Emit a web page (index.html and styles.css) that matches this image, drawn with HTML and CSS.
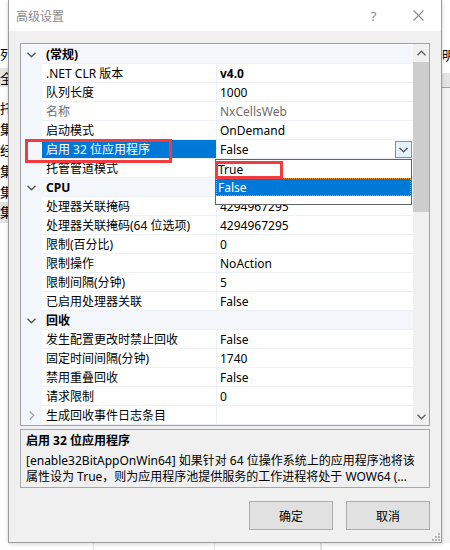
FILE: index.html
```html
<!DOCTYPE html>
<html lang="zh-CN">
<head>
  <meta charset="UTF-8">
  <meta name="viewport" content="width=device-width, initial-scale=1.0">
  <title>高级设置</title>
  <link rel="stylesheet" href="styles.css">
</head>
<body>

<!-- the IIS manager window behind the dialog -->
<div class="backdrop">
  <ul class="pool-list">
    <li class="head">列表</li>
    <li class="tab">全部</li>
    <li>托管</li>
    <li>集成</li>
    <li>经典</li>
    <li>集成</li>
    <li>集成</li>
    <li class="tab">集成</li>
  </ul>
  <div class="actions">
    <div class="head">明细</div>
    <div class="band"></div>
    <div class="rest"></div>
  </div>
  <div class="table-cols">
    <span style="width:93px"></span>
    <span style="width:120px"></span>
    <span style="width:105px"></span>
    <span></span>
  </div>
</div>

<div class="dialog">
  <div class="titlebar">
    <span class="title">高级设置</span>
    <span class="cap-btn">?</span>
    <span class="cap-btn">
      <svg width="11" height="11" viewBox="0 0 11 11"><path d="M0.5 0.5 L10.5 10.5 M10.5 0.5 L0.5 10.5" stroke="#8c8c8c" stroke-width="1.1" fill="none"/></svg>
    </span>
  </div>

  <div class="content">
    <div class="grid">
      <div class="rows">
        <div class="row cat">
          <span class="gutter"><svg width="9" height="6" viewBox="0 0 9 6"><path d="M0.5 0.8 L4.5 4.8 L8.5 0.8" stroke="#555" stroke-width="1.4" fill="none"/></svg></span>
          <span class="name">(常规)</span><span class="value"></span>
        </div>
        <div class="row"><span class="gutter"></span><span class="name">.NET CLR 版本</span><span class="value bold">v4.0</span></div>
        <div class="row"><span class="gutter"></span><span class="name">队列长度</span><span class="value">1000</span></div>
        <div class="row readonly"><span class="gutter"></span><span class="name">名称</span><span class="value">NxCellsWeb</span></div>
        <div class="row"><span class="gutter"></span><span class="name">启动模式</span><span class="value">OnDemand</span></div>
        <div class="row selected">
          <span class="gutter"></span><span class="name">启用 32 位应用程序</span>
          <span class="value">False
            <span class="drop-btn"><svg width="9" height="6" viewBox="0 0 9 6"><path d="M0.5 0.8 L4.5 4.8 L8.5 0.8" stroke="#333" stroke-width="1.1" fill="none"/></svg></span>
          </span>
        </div>
        <div class="row"><span class="gutter"></span><span class="name">托管管道模式</span><span class="value"></span></div>
        <div class="row cat">
          <span class="gutter"><svg width="9" height="6" viewBox="0 0 9 6"><path d="M0.5 0.8 L4.5 4.8 L8.5 0.8" stroke="#555" stroke-width="1.4" fill="none"/></svg></span>
          <span class="name">CPU</span><span class="value"></span>
        </div>
        <div class="row"><span class="gutter"></span><span class="name">处理器关联掩码</span><span class="value">4294967295</span></div>
        <div class="row"><span class="gutter"></span><span class="name">处理器关联掩码(64 位选项)</span><span class="value">4294967295</span></div>
        <div class="row"><span class="gutter"></span><span class="name">限制(百分比)</span><span class="value">0</span></div>
        <div class="row"><span class="gutter"></span><span class="name">限制操作</span><span class="value">NoAction</span></div>
        <div class="row"><span class="gutter"></span><span class="name">限制间隔(分钟)</span><span class="value">5</span></div>
        <div class="row"><span class="gutter"></span><span class="name">已启用处理器关联</span><span class="value">False</span></div>
        <div class="row cat">
          <span class="gutter"><svg width="9" height="6" viewBox="0 0 9 6"><path d="M0.5 0.8 L4.5 4.8 L8.5 0.8" stroke="#555" stroke-width="1.4" fill="none"/></svg></span>
          <span class="name">回收</span><span class="value"></span>
        </div>
        <div class="row"><span class="gutter"></span><span class="name">发生配置更改时禁止回收</span><span class="value">False</span></div>
        <div class="row"><span class="gutter"></span><span class="name">固定时间间隔(分钟)</span><span class="value">1740</span></div>
        <div class="row"><span class="gutter"></span><span class="name">禁用重叠回收</span><span class="value">False</span></div>
        <div class="row"><span class="gutter"></span><span class="name">请求限制</span><span class="value">0</span></div>
        <div class="row">
          <span class="gutter"><svg width="6" height="9" viewBox="0 0 6 9"><path d="M0.8 0.5 L4.8 4.5 L0.8 8.5" stroke="#a6a6a6" stroke-width="1.3" fill="none"/></svg></span>
          <span class="name">生成回收事件日志条目</span><span class="value"></span>
        </div>
      </div>

      <div class="scrollbar">
        <span class="arrow"><svg width="9" height="6" viewBox="0 0 9 6"><path d="M0.5 5.2 L4.5 1.2 L8.5 5.2" stroke="#606060" stroke-width="1.4" fill="none"/></svg></span>
        <span class="thumb"></span>
        <span class="track"></span>
        <span class="arrow"><svg width="9" height="6" viewBox="0 0 9 6"><path d="M0.5 0.8 L4.5 4.8 L8.5 0.8" stroke="#606060" stroke-width="1.4" fill="none"/></svg></span>
      </div>

      <!-- open combo list for the selected property -->
      <ul class="dropdown">
        <li>True</li>
        <li class="picked">False</li>
      </ul>

      <!-- red marker boxes -->
      <span class="mark mark-name"></span>
      <span class="mark mark-true"></span>
    </div>

    <div class="desc">
      <div class="desc-title">启用 32 位应用程序</div>
      <div class="desc-line">[enable32BitAppOnWin64] 如果针对 64 位操作系统上的应用程序池将该</div>
      <div class="desc-line">属性设为 True，则为应用程序池提供服务的工作进程将处于 WOW64 (...</div>
    </div>

    <div class="buttons">
      <button class="btn">确定</button>
      <button class="btn">取消</button>
    </div>
  </div>

  <svg class="grip" width="9" height="9" viewBox="0 0 9 9">
    <g fill="#b4b4b4">
      <rect x="7" y="1" width="2" height="2"/>
      <rect x="4" y="4" width="2" height="2"/><rect x="7" y="4" width="2" height="2"/>
      <rect x="1" y="7" width="2" height="2"/><rect x="4" y="7" width="2" height="2"/><rect x="7" y="7" width="2" height="2"/>
    </g>
  </svg>
</div>

</body>
</html>
```

FILE: styles.css
```css
body {
  margin: 0;
  width: 450px;
  height: 550px;
  overflow: hidden;
  position: relative;
  background-color: #fff;
  font-family: "Noto Sans", "Noto Sans CJK SC", sans-serif;
  font-size: 12px;
  color: #000;
}

/* window behind the dialog */
.backdrop {
  display: grid;
  grid-template-columns: 8px 1fr 8px;
  grid-template-rows: 543px 7px;
  height: 550px;
}

.pool-list {
  list-style: none;
  margin: 0;
  padding: 44px 0 0 0;
  overflow: hidden;
  font-family: "Noto Sans CJK SC", sans-serif;
  font-size: 13px;
  white-space: nowrap;
}

.pool-list li {
  height: 21px;
  line-height: 21px;
}

.pool-list .head {
  height: 19px;
  line-height: 19px;
  margin-bottom: 5px;
}

.pool-list .tab {
  height: 19px;
  line-height: 19px;
  background-color: #e3e3e3;
  margin-bottom: 10px;
}

.pool-list .tab:last-child {
  height: 21px;
  margin-bottom: 0;
}

.actions {
  grid-column: 3;
  display: flex;
  flex-direction: column;
  overflow: hidden;
  font-family: "Noto Sans CJK SC", sans-serif;
  font-size: 13px;
  white-space: nowrap;
}

.actions .head {
  padding-top: 45px;
  line-height: 19px;
}

.actions .band {
  margin-top: 9px;
  height: 14px;
  background-color: #e4e4e4;
  border-bottom: 1px solid #9aa3b3;
}

.actions .rest {
  flex: 1;
  background-color: #f3f3f3;
}

.table-cols {
  grid-column: 1 / -1;
  display: flex;
}

.table-cols span {
  border-right: 1px solid #e2e2e2;
}

/* dialog window */
.dialog {
  position: absolute;
  left: 8px;
  top: -1px;
  width: 434px;
  height: 544px;
  box-sizing: border-box;
  border: 1px solid #9c9c9c;
  background-color: #f0f0f0;
  box-shadow: 0 1px 4px rgba(0, 0, 0, 0.18);
}

.titlebar {
  height: 31px;
  display: flex;
  align-items: center;
  padding-left: 7px;
  background-color: #fff;
}

.title {
  flex: 1;
  font-family: "Noto Sans CJK SC", sans-serif;
  color: #8c8c8c;
}

.cap-btn {
  width: 45px;
  height: 31px;
  display: flex;
  align-items: center;
  justify-content: center;
  color: #8c8c8c;
  font-size: 13px;
}

.content {
  padding: 12px 11px 0 11px;
}

/* property grid */
.grid {
  position: relative;
  height: 383px;
  box-sizing: border-box;
  border: 1px solid #a3a3a3;
  display: flex;
  background-color: #fff;
}

.rows {
  flex: 1;
  padding-top: 1px;
  overflow: hidden;
}

.row {
  display: grid;
  grid-template-columns: 21px 175px 1fr;
  height: 19px;
  white-space: nowrap;
}

.row .gutter {
  background-color: #f3f6fa;
  display: flex;
  align-items: center;
  justify-content: center;
}

.row .name,
.row .value {
  border-bottom: 1px solid #edf0f5;
  overflow: hidden;
  padding-top: 1px;
  line-height: 18px;
}

.row .name {
  padding-left: 4px;
  border-right: 1px solid #edf0f5;
}

.row .value {
  padding-left: 3px;
  position: relative;
}

.bold {
  font-weight: bold;
}

.row.cat {
  background-color: #f3f6fa;
  font-weight: bold;
}

.row.cat .name {
  border-right: none;
}

.row.readonly {
  color: #6d6d6d;
}

.row.selected .name {
  background-color: #0078d7;
  color: #fff;
}

.drop-btn {
  position: absolute;
  right: 1px;
  top: 1px;
  width: 17px;
  height: 17px;
  box-sizing: border-box;
  border: 1px solid #4d9be3;
  background-color: #e5f1fb;
  display: flex;
  align-items: center;
  justify-content: center;
}

.scrollbar {
  width: 16px;
  display: flex;
  flex-direction: column;
  background-color: #f0f0f0;
}

.scrollbar .arrow {
  height: 17px;
  display: flex;
  align-items: center;
  justify-content: center;
}

.scrollbar .thumb {
  margin-top: 1px;
  height: 150px;
  background-color: #cdcdcd;
}

.scrollbar .track {
  flex: 1;
}

.dropdown {
  position: absolute;
  left: 194px;
  top: 115px;
  width: 197px;
  height: 46px;
  box-sizing: border-box;
  margin: 0;
  padding: 0;
  list-style: none;
  border: 1px solid #646464;
  background-color: #fff;
}

.dropdown li {
  height: 18px;
  line-height: 19px;
  padding-left: 2px;
}

.dropdown .picked {
  background-color: #0078d7;
  color: #fff;
  outline: 1px dotted #e8952e;
  outline-offset: -1px;
}

.mark {
  position: absolute;
  border: 3px solid #f23b3f;
  box-sizing: border-box;
}

.mark-name {
  left: 4px;
  top: 95px;
  width: 147px;
  height: 24px;
}

.mark-true {
  left: 194px;
  top: 117px;
  width: 68px;
  height: 18px;
}

/* description panel */
.desc {
  margin-top: 3px;
  height: 59px;
  box-sizing: border-box;
  border: 1px solid #a8a8a8;
  padding: 1px 0 0 5px;
  white-space: nowrap;
  overflow: hidden;
}

.desc-title {
  font-weight: bold;
  line-height: 20px;
}

.desc-line {
  line-height: 16px;
}

.desc-title + .desc-line {
  margin-top: 2px;
}

.buttons {
  margin-top: 13px;
  display: flex;
  justify-content: flex-end;
  gap: 13px;
}

.btn {
  width: 84px;
  height: 29px;
  font-family: "Noto Sans CJK SC", sans-serif;
  font-size: 12px;
  color: #000;
  background-color: #e1e1e1;
  border: 1px solid #adadad;
  padding: 0;
}

.grip {
  position: absolute;
  right: 1px;
  bottom: 1px;
}
```
